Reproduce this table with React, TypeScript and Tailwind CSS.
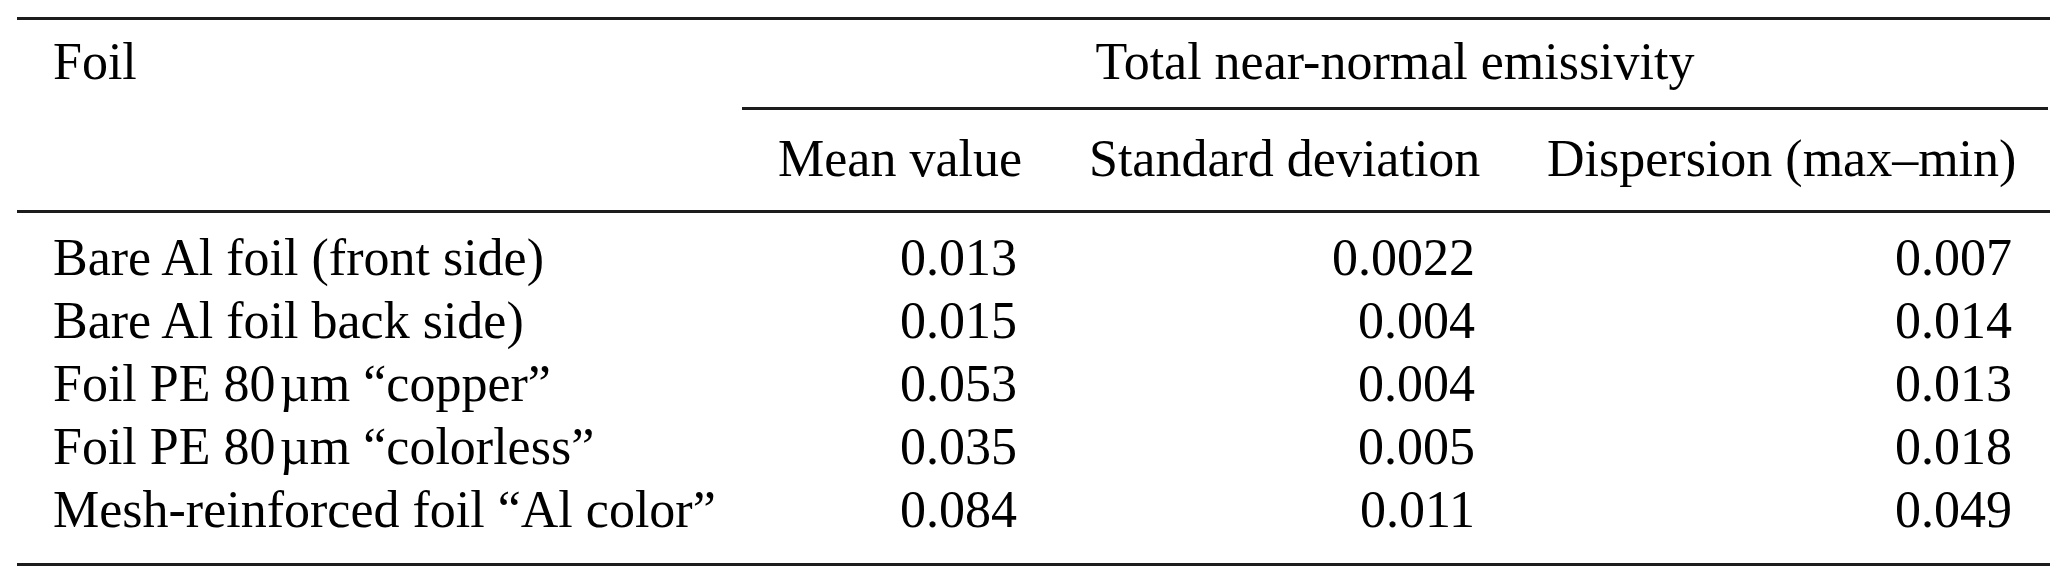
import React from 'react';

interface Row {
  foil: string;
  mean: string;
  sd: string;
  disp: string;
}

const rows: Row[] = [
  { foil: 'Bare Al foil (front side)', mean: '0.013', sd: '0.0022', disp: '0.007' },
  { foil: 'Bare Al foil back side)', mean: '0.015', sd: '0.004', disp: '0.014' },
  { foil: 'Foil PE 80\u200aµm “copper”', mean: '0.053', sd: '0.004', disp: '0.013' },
  { foil: 'Foil PE 80\u200aµm “colorless”', mean: '0.035', sd: '0.005', disp: '0.018' },
  { foil: 'Mesh-reinforced foil “Al color”', mean: '0.084', sd: '0.011', disp: '0.049' },
];

const cols = 'grid grid-cols-[725px_311px_458px_537px] whitespace-nowrap';

const App: React.FC = () => {
  return (
    <div
      className="w-[2067px] h-[584px] bg-white text-black pt-[17px] px-[17px]"
      style={{ fontFamily: '"Liberation Serif", "Times New Roman", serif' }}
    >
      <div className="text-[52px] leading-[63px]">
        {/* top rule */}
        <div className="h-[3px] bg-[#1c1c1c]" />

        {/* header */}
        <div className={cols}>
          <div className="row-span-3 pl-[36px] pt-[10px]">Foil</div>
          <div className="col-span-3 h-[87px] pt-[10px] text-center">Total near-normal emissivity</div>
          <div className="col-span-3 h-[3px] bg-[#1c1c1c]" />
          <div className="h-[100px] pt-[17px] px-[36px] text-right">Mean value</div>
          <div className="h-[100px] pt-[17px] px-[36px] text-right">Standard deviation</div>
          <div className="h-[100px] pt-[17px] px-[36px] text-right">Dispersion (max–min)</div>
        </div>

        <div className="h-[3px] bg-[#1c1c1c]" />

        {/* body */}
        <div className="pt-[13px] pb-[22px]">
          {rows.map((r) => (
            <div key={r.foil} className={cols}>
              <div className="pl-[36px]">{r.foil}</div>
              <div className="px-[36px] text-right">{r.mean}</div>
              <div className="px-[36px] text-right">{r.sd}</div>
              <div className="px-[36px] text-right">{r.disp}</div>
            </div>
          ))}
        </div>

        {/* bottom rule */}
        <div className="h-[3px] bg-[#1c1c1c]" />
      </div>
    </div>
  );
};

export default App;
